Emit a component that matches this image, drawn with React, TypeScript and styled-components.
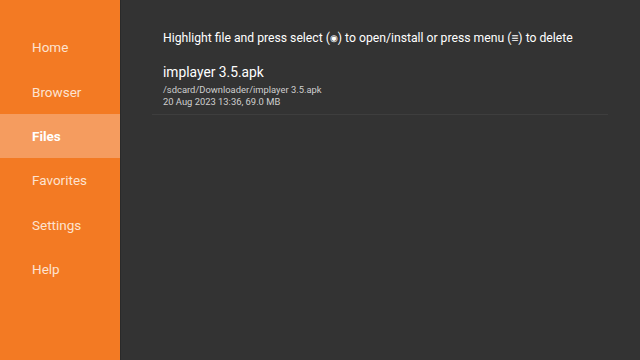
import { createGlobalStyle } from "styled-components";
import styled from "styled-components";

const GlobalStyle = createGlobalStyle`
  html, body {
    margin: 0;
    padding: 0;
    background: #333333;
  }
  body {
    font-family: Roboto, "Noto Sans", "Liberation Sans", sans-serif;
  }
`;

const menu = ["Home", "Browser", "Files", "Favorites", "Settings", "Help"];

export default function App() {
  const active = "Files";
  return (
    <>
      <GlobalStyle />
      <Screen>
        <Sidebar>
          {menu.map((m) => (
            <MenuItem key={m} $active={m === active}>
              {m}
            </MenuItem>
          ))}
        </Sidebar>
        <Main>
          <Hint>
            Highlight file and press select (<Glyph>◉</Glyph>) to open/install
            or press menu (<Glyph $size={12}>≡</Glyph>) to delete
          </Hint>
          <FileRow>
            <FileName>implayer 3.5.apk</FileName>
            <FileMeta>/sdcard/Downloader/implayer 3.5.apk</FileMeta>
            <FileMeta>20 Aug 2023 13:36, 69.0 MB</FileMeta>
          </FileRow>
        </Main>
      </Screen>
    </>
  );
}

const Screen = styled.div`
  display: flex;
  width: 640px;
  height: 360px;
  overflow: hidden;
  background: #333333;
`;

const Sidebar = styled.nav`
  width: 121px;
  flex-shrink: 0;
  background: #f37a23;
  border-right: 1px solid #2a2a2a;
  padding-top: 25px;
  box-sizing: border-box;
  display: flex;
  flex-direction: column;
`;

const MenuItem = styled.div<{ $active?: boolean }>`
  height: 44.4px;
  display: flex;
  align-items: center;
  padding-left: 32px;
  font-size: 13.5px;
  color: ${(p) => (p.$active ? "#ffffff" : "#fde3d0")};
  font-weight: ${(p) => (p.$active ? 700 : 400)};
  background: ${(p) => (p.$active ? "#f59c5f" : "transparent")};
`;

const Main = styled.main`
  flex: 1;
  padding: 30px 32px 0 31px;
  display: flex;
  flex-direction: column;
`;

const Hint = styled.div`
  color: #ffffff;
  font-size: 12.2px;
  line-height: 16px;
  padding-left: 11px;
  margin-bottom: 18px;
  white-space: nowrap;
`;

const Glyph = styled.span<{ $size?: number }>`
  font-size: ${(p) => p.$size ?? 9}px;
  vertical-align: ${(p) => (p.$size ? 0 : 1)}px;
  line-height: 1;
`;

const FileRow = styled.div`
  padding: 0 0 6px 11px;
  border-bottom: 1px solid #3e3e3e;
  display: flex;
  flex-direction: column;
`;

const FileName = styled.div`
  color: #ffffff;
  font-size: 13.8px;
  line-height: 17px;
  margin-bottom: 3px;
`;

const FileMeta = styled.div`
  color: #cfcfcf;
  font-size: 9.4px;
  line-height: 12px;
`;
